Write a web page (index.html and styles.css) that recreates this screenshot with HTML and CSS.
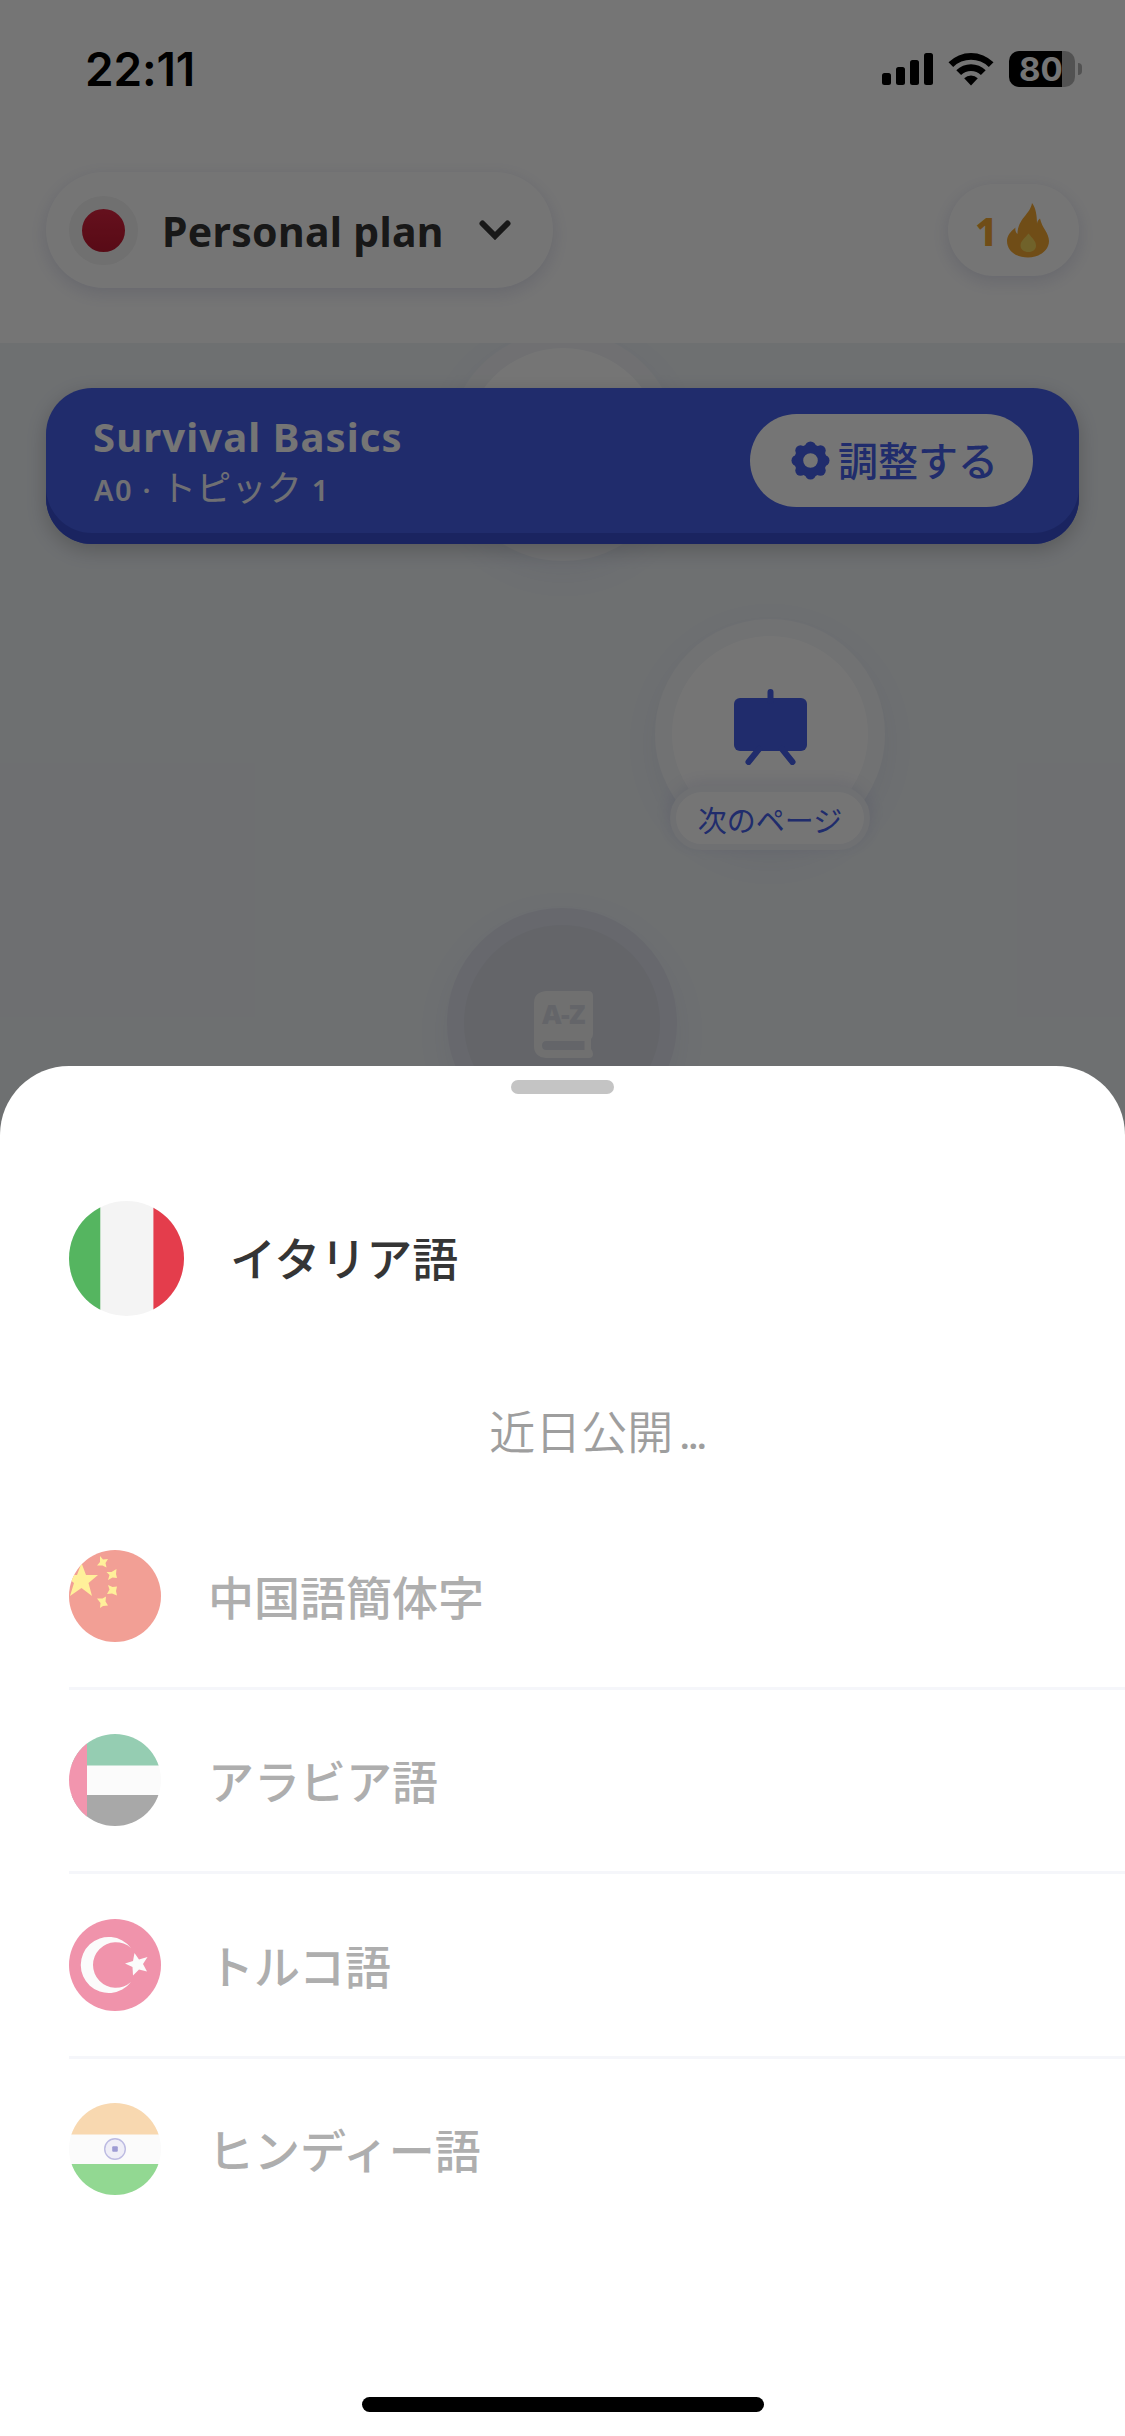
FILE: index.html
```html
<!DOCTYPE html>
<html lang="ja">
<head>
<meta charset="utf-8">
<title>Personal plan</title>
<link rel="stylesheet" href="styles.css">
</head>
<body>
<div class="screen">
  <header class="header">
    <div class="status">
      <span class="clock">22:11</span>
      <div class="status-icons">
        <svg class="signal" width="51" height="32" viewBox="0 0 51 32"><rect y="20" width="9" height="12" rx="2.5"/><rect x="14" y="14" width="9" height="18" rx="2.5"/><rect x="28" y="7" width="9" height="25" rx="2.5"/><rect x="42" width="9" height="32" rx="2.5"/></svg>
        <svg class="wifi" width="46" height="34" viewBox="0 0 46 34"><path d="M0.5 10.3A32 32 0 0 1 45.5 10.3L40.8 15A25.400 25.400 0 0 0 5.200 15Z"/><path d="M8.300 18.200A21 21 0 0 1 37.700 18.200L32.900 23A14.200 14.200 0 0 0 13.100 23Z"/><path d="M16.200 26.200A9.800 9.800 0 0 1 29.800 26.200L23 33.500Z"/></svg>
        <div class="battery"><span class="battery-body">80</span><span class="battery-cap"></span></div>
      </div>
    </div>
    <div class="toolbar">
      <div class="plan">
        <span class="flag-jp"></span>
        <span class="plan-name">Personal plan</span>
        <svg width="32" height="20" viewBox="0 0 32 20"><path d="M3.500 3.500L16 16L28.500 3.500" fill="none" stroke="#353535" stroke-width="6" stroke-linecap="round"/></svg>
      </div>
      <div class="streak">
        <span>1</span>
        <svg width="42" height="55" viewBox="0 0 42 55"><path fill="#f5a833" d="M25 0C23 12 11 15 10.500 31C8.500 29 8 27 8.500 24.500C3 29 0 33 0 38C0 48 9 54.500 21 54.500C33 54.500 42 47 42 38C42 30 35 25 33 15.500C31 17 30 19 30 21C30 13 29 5 25 0Z"/><path fill="#f5d65c" d="M21.500 30.500C18 35 13.500 38 13.500 42.500C13.500 46.500 17 49 21.500 49C26 49 29 46.500 29 42.500C29 38 25 35 21.500 30.500Z"/></svg>
      </div>
    </div>
  </header>

  <main class="path">
    <div class="node node-first"></div>
    <div class="node node-next">
      <svg class="board" width="73" height="76" viewBox="0 0 73 76"><rect y="9" width="73" height="53" rx="6"/><path d="M36.500 3V12M25 60L14.500 73M48 60L58.500 73" fill="none" stroke="#4660eb" stroke-width="6" stroke-linecap="round"/></svg>
      <span class="node-label">次のページ</span>
    </div>
    <div class="node node-locked">
      <div class="book">
        <svg width="59" height="67" viewBox="0 0 59 67"><path fill-rule="evenodd" d="M12 0H54Q59 0 59 5V43Q59 46 57 48V58Q59 60 59 63Q59 67 55 67H12Q0 66 0 55V12Q0 1 12 0ZM12.500 50Q8 50 8 54.500Q8 59 12.500 59H50.500V50Z"/></svg>
        <span class="book-text">A-Z</span>
      </div>
    </div>
    <section class="banner">
      <div class="banner-text">
        <h1>Survival Basics</h1>
        <p><span>A0 ·</span><span class="topic">トピック</span><span>1</span></p>
      </div>
      <div class="adjust">
        <svg width="39" height="39" viewBox="-19.500 -19.500 39 39"><g fill="#4660eb"><circle cy="-13.500" r="5.500"/><circle cy="13.500" r="5.500"/><circle cx="-13.500" r="5.500"/><circle cx="13.500" r="5.500"/><circle cx="10" cy="-10" r="5.200"/><circle cx="-10" cy="-10" r="5.200"/><circle cx="10" cy="10" r="5.200"/><circle cx="-10" cy="10" r="5.200"/></g><circle r="11.800" fill="none" stroke="#4660eb" stroke-width="9"/></svg>
        <span class="adjust-text">調整する</span>
      </div>
    </section>
  </main>

  <div class="scrim"></div>

  <section class="sheet">
    <span class="grabber"></span>
    <div class="language">
      <svg class="flag" viewBox="0 0 100 100"><clipPath id="round"><circle cx="50" cy="50" r="50"/></clipPath><g clip-path="url(#round)"><rect width="100" height="100" fill="#f4f4f4"/><rect width="27.200" height="100" fill="#55b560"/><rect x="73.400" width="27" height="100" fill="#e43d4c"/></g></svg>
      <span class="language-name">イタリア語</span>
    </div>
    <p class="soon"><span>近日公開</span><b>...</b></p>
    <ul class="upcoming">
      <li>
        <svg class="flag" viewBox="0 0 92 92"><clipPath id="r2"><circle cx="46" cy="46" r="46"/></clipPath><g clip-path="url(#r2)"><rect width="92" height="92" fill="#f29f95"/><g fill="#fff09a"><path d="M12.500 13L17 25L29 25L19.500 33L23 46L12.500 38L1 46L5 33L-5 25L8 25Z"/><path d="M31 6L34 9.500L39 9L36.500 13L37.500 17.500L33.500 15.500L28 15.500L31 12Z"/><path d="M47.500 19L47 24L48 28L43.500 27.500L39 30L40.500 25L37.500 22L42.500 22Z"/><path d="M39 35L43.500 37L48 36.500L47 41L48 45.500L43 43.500L38 44L40.500 39.500Z"/><path d="M28 48.500L33.500 48.500L37 46.500L36.500 51.500L39 55.500L34 56L31 58L31.500 53Z"/></g></g></svg>
        <span>中国語簡体字</span>
      </li>
      <li>
        <svg class="flag" viewBox="0 0 92 92"><g clip-path="url(#r2)"><rect width="92" height="92" fill="#fbfbfb"/><rect width="92" height="31.500" fill="#95cdb2"/><rect y="61" width="92" height="31" fill="#a8a8a8"/><rect width="18" height="92" fill="#f295ae"/></g></svg>
        <span>アラビア語</span>
      </li>
      <li>
        <svg class="flag" viewBox="0 0 92 92"><circle cx="46" cy="46" r="46" fill="#f093ab"/><path fill="#fbfbfb" d="M62 29A28 28 0 1 0 62 63A22.800 22.800 0 1 1 62 29Z"/><path fill="#fbfbfb" d="M65.500 34L70 40.500L78.500 38L74 45L78 52.500L70 50.500L64 56.500L63.500 48L56 44.500L64 42Z"/></svg>
        <span>トルコ語</span>
      </li>
      <li>
        <svg class="flag" viewBox="0 0 92 92"><g clip-path="url(#r2)"><rect width="92" height="92" fill="#fbfbfb"/><rect width="92" height="31.500" fill="#f8d8b0"/><rect y="61" width="92" height="31" fill="#92d892"/></g><circle cx="46" cy="46" r="10.300" fill="#efeef7" stroke="#bdbbe2" stroke-width="1.400"/><rect x="43.200" y="43.200" width="5.600" height="5.600" rx="1" fill="#9d9bd3"/></svg>
        <span>ヒンディー語</span>
      </li>
    </ul>
    <span class="home-indicator"></span>
  </section>
</div>
</body>
</html>
```
FILE: styles.css
```css
* { box-sizing: border-box; }

body {
  margin: 0;
  font-family: "Noto Sans CJK JP", sans-serif;
}

h1, p, ul { margin: 0; padding: 0; }
svg { display: block; flex: none; }

.screen {
  position: relative;
  display: flex;
  flex-direction: column;
  width: 1125px;
  height: 2436px;
  overflow: hidden;
  background: #eff3f7;
}

.header {
  height: 343px;
  background: #fff;
}

.status {
  display: flex;
  justify-content: space-between;
  align-items: center;
  height: 138px;
  padding: 0 43px 0 85px;
}

.clock {
  font: 600 46px/1 Inter, sans-serif;
  letter-spacing: -0.2px;
  color: #000;
}

.status-icons {
  display: flex;
  align-items: center;
  gap: 15px;
}

.battery {
  display: flex;
  align-items: center;
  gap: 3px;
}

.battery-body {
  width: 66px;
  height: 36px;
  padding-left: 10px;
  border-radius: 10px;
  background: linear-gradient(90deg, #000 53px, #b4b4b4 53px);
  color: #fff;
  font: 700 33px/36px Inter, sans-serif;
}

.battery-cap {
  width: 4px;
  height: 12px;
  border-radius: 0 4px 4px 0;
  background: #b4b4b4;
}

.toolbar {
  display: flex;
  justify-content: space-between;
  align-items: center;
  padding: 34px 46px 0;
}

.plan, .streak {
  display: flex;
  align-items: center;
  background: #fff;
  box-shadow: 0 5px 18px rgba(60, 70, 150, 0.16);
}

.plan {
  width: 507px;
  height: 116px;
  padding: 0 42px 0 23px;
  border-radius: 58px;
}

.flag-jp {
  width: 69px;
  height: 69px;
  border: 13.5px solid #f4f4f4;
  border-radius: 50%;
  background: linear-gradient(#dc2440, #c01830);
}

.plan-name {
  flex: 1;
  padding: 2px 0 0 24px;
  color: #353535;
  font: 700 41px/1 "Noto Sans", sans-serif;
  letter-spacing: 0.3px;
  white-space: nowrap;
}

.streak {
  width: 131px;
  height: 92px;
  padding: 0 30px 0 27px;
  justify-content: space-between;
  border-radius: 46px;
  color: #f5a833;
  font: 800 39px/1 "Noto Sans", sans-serif;
}

.path {
  position: relative;
  flex: 1;
  padding: 45px 46px 0;
  overflow: hidden;
}

/* Lesson nodes sit freely on the winding path. */
.node {
  position: absolute;
  width: 230px;
  height: 230px;
  border: 17px solid #f6f8fa;
  border-radius: 50%;
  background: #fff;
  box-shadow: 0 10px 34px rgba(90, 100, 190, 0.07);
}

.node-first {
  left: 448px;
  top: -12px;
  border-color: #f3f5f8;
}

.node-next { left: 655px; top: 276px; }

.node-locked {
  left: 447px;
  top: 565px;
  border-color: #e0e2ed;
  background: #d9dce5;
}

.board {
  margin: 53px auto 0;
  fill: #4660eb;
}

.node-label {
  position: absolute;
  left: -2px;
  top: 150px;
  width: 200px;
  height: 64px;
  border: 6px solid #f1f3f8;
  border-radius: 32px;
  background: #fff;
  box-shadow: 0 -4px 16px rgba(70, 80, 170, 0.12);
  color: #4660eb;
  font-size: 29px;
  line-height: 54px;
  text-align: center;
  white-space: nowrap;
}

.book {
  position: relative;
  width: 59px;
  margin: 66px auto 0 70px;
  fill: #f4f4f4;
}

.book-text {
  position: absolute;
  left: 0;
  top: 9px;
  width: 59px;
  color: #d9dce5;
  font: 900 27px/28px "Noto Sans", sans-serif;
  letter-spacing: -0.5px;
  text-align: center;
}

.banner {
  position: relative;
  display: flex;
  justify-content: space-between;
  height: 156px;
  padding: 26px 46px 0 47px;
  border-radius: 46px;
  background: #4660eb;
  box-shadow: inset 0 -11px #3950d1, 0 6px 20px rgba(0, 0, 0, 0.2);
}

.banner h1 {
  color: #fff;
  font: 700 40px/46px "Noto Sans", sans-serif;
  letter-spacing: 1.1px;
}

.banner p {
  display: flex;
  align-items: baseline;
  padding-left: 1px;
  color: #f4f5fb;
  font: 600 29px/52px "Noto Sans", sans-serif;
  letter-spacing: 1.6px;
}

.topic {
  margin: 0 10px 0 9px;
  font: 400 35px/52px "Noto Sans CJK JP", sans-serif;
  letter-spacing: 0.2px;
}

.adjust {
  display: flex;
  align-items: center;
  gap: 8px;
  width: 283px;
  height: 93px;
  padding-left: 41px;
  border-radius: 47px;
  background: #fff;
  color: #4660eb;
  font-size: 40px;
  font-weight: 500;
  line-height: 1;
}

.adjust-text { padding-bottom: 4px; }

.scrim {
  position: absolute;
  inset: 0;
  background: rgba(0, 0, 0, 0.54);
}

.sheet {
  position: absolute;
  inset: 1066px 0 0;
  display: flex;
  flex-direction: column;
  border-radius: 69px 69px 0 0;
  background: #fff;
}

.grabber {
  width: 103px;
  height: 14px;
  margin: 14px auto 0;
  border-radius: 7px;
  background: #c4c4c4;
}

.language {
  display: flex;
  align-items: center;
  gap: 46px;
  margin: 107px 0 0 69px;
  color: #353535;
  font-size: 46px;
  font-weight: 500;
  line-height: 1;
}

.language .flag { width: 115px; height: 115px; }
.language-name { padding-bottom: 5px; }

.soon {
  display: flex;
  justify-content: center;
  align-items: baseline;
  gap: 7px;
  margin: 79px 0 0 70px;
  color: #9e9e9e;
  font-size: 46px;
  font-weight: 350;
  line-height: 68px;
}

.soon b {
  font: 700 32px/1 "Noto Sans", sans-serif;
  letter-spacing: -0.5px;
}

.upcoming {
  margin-left: 69px;
  margin-top: 42px;
  list-style: none;
}

.upcoming li {
  display: flex;
  align-items: center;
  gap: 47px;
  height: 184.5px;
  border-bottom: 3px solid #f5f6fa;
  color: #aeaeae;
  font-size: 46px;
  font-weight: 500;
  line-height: 1;
}

.upcoming li span { padding-bottom: 2px; }
.upcoming li:last-child { border-bottom-color: transparent; }
.upcoming .flag { width: 92px; height: 92px; }

.home-indicator {
  width: 402px;
  height: 15px;
  margin: auto auto 24px;
  border-radius: 8px;
  background: #000;
}
```
